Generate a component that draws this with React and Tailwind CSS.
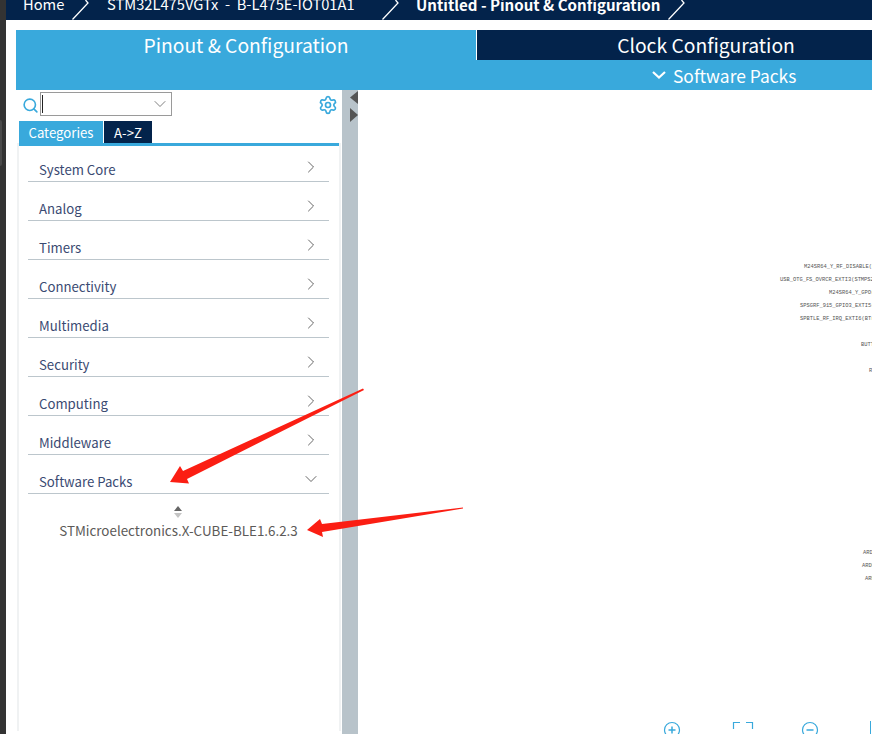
import { ChevronDown, ChevronRight, Search, Settings } from "lucide-react";

const categories = [
  "System Core",
  "Analog",
  "Timers",
  "Connectivity",
  "Multimedia",
  "Security",
  "Computing",
  "Middleware",
];

// pin labels on the chip canvas, clipped by the right edge like in the tool
const pins = [
  { text: "M24SR64_Y_RF_DISABLE(M24SR64", left: 446, top: 171 },
  { text: "USB_OTG_FS_OVRCR_EXTI3(STMPS2141", left: 422, top: 184 },
  { text: "M24SR64_Y_GPO(M24SR64", left: 471, top: 197 },
  { text: "SPSGRF_915_GPIO3_EXTI5(SPSGRF", left: 442, top: 210 },
  { text: "SPBTLE_RF_IRQ_EXTI6(BTrf", left: 442, top: 223 },
  { text: "BUTTON", left: 503, top: 249 },
  { text: "RESET", left: 511, top: 275 },
  { text: "ARDUINO", left: 505, top: 457 },
  { text: "ARDUINO", left: 504, top: 470 },
  { text: "ARDUINO", left: 507, top: 483 },
];

function Crumb({ children, className = "" }) {
  return (
    <div className={`flex items-end shrink-0 ${className}`}>
      <span className="whitespace-nowrap leading-[20px] pb-[6px]">{children}</span>
    </div>
  );
}

function Slash({ className = "" }) {
  return (
    <svg width="17" height="20" viewBox="0 0 17 20" className={`shrink-0 ${className}`}>
      <path d="M0.5 19.5 L16 3 L13.5 0" fill="none" stroke="#fff" strokeWidth="1.3" />
    </svg>
  );
}

export default function App() {
  return (
    <div
      className="relative w-[872px] h-[734px] overflow-hidden bg-white flex text-[#03234b]"
      style={{ fontFamily: '"Noto Sans CJK SC", "Noto Sans", sans-serif' }}
    >
      {/* edge of the window behind */}
      <div className="w-[6px] shrink-0 bg-[#333333] flex flex-col pt-[120px]">
        <div className="h-[46px] w-[2px] bg-[#4a4a4a] rounded-r-sm" />
      </div>

      <div className="flex-1 min-w-0 flex flex-col">
        {/* breadcrumb */}
        <div className="h-[20px] bg-[#03234b] text-white text-[14.7px] flex items-end overflow-hidden pl-[17px] shrink-0">
          <Crumb className="w-[49px]">Home</Crumb>
          <Slash />
          <Crumb className="ml-[18px] w-[275px]">STM32L475VGTx&nbsp;&nbsp;-&nbsp;&nbsp;B-L475E-IOT01A1</Crumb>
          <Slash />
          <Crumb className="ml-[17px] w-[252px] font-bold text-[15.1px]">Untitled - Pinout &amp; Configuration</Crumb>
          <Slash />
        </div>

        <div className="h-[10px] shrink-0" />

        {/* main tabs */}
        <div className="flex h-[30px] shrink-0 pl-[10px]">
          <div className="w-[460px] bg-[#39a9dc] text-white text-[19.3px] leading-[30px] pb-[2px] text-center">
            Pinout &amp; Configuration
          </div>
          <div className="w-[1px] bg-white" />
          <div className="flex-1 bg-[#03234b] text-white text-[19.3px] leading-[30px] text-center pl-[63px]">
            Clock Configuration
          </div>
        </div>
        <div className="h-[30px] shrink-0 ml-[10px] bg-[#39a9dc] text-white flex items-center pl-[636px]">
          <svg width="14" height="8" viewBox="0 0 14 8" className="shrink-0 mb-[1px]">
            <path d="M1 1 L7 6.5 L13 1" fill="none" stroke="#fff" strokeWidth="2.2" />
          </svg>
          <span className="ml-[7px] text-[17.4px] leading-[30px] pt-[1px] whitespace-nowrap">Software Packs</span>
        </div>

        <div className="flex-1 min-h-0 flex pl-[10px]">
          {/* left panel */}
          <div className="w-[326px] shrink-0 flex flex-col">
            <div className="h-[30px] flex items-center pl-[6px] pr-[4px] shrink-0">
              <Search size={17} strokeWidth={2.3} className="text-[#39a9dc] shrink-0 mr-[1px]" />
              <div className="w-[132px] h-[24px] border border-[#9a9a9a] flex items-center justify-between pr-[1px] mb-[2px]">
                <span className="w-[1px] h-[18px] ml-[1px] bg-[#222]" />
                <ChevronDown size={20} strokeWidth={0.9} className="text-[#555]" />
              </div>
              <Settings size={20} strokeWidth={2} className="ml-auto text-[#39a9dc]" />
            </div>

            <div className="flex pl-[3px] h-[22px] mt-[1px] shrink-0 text-[13.2px] leading-[22px]">
              <div className="w-[84px] bg-[#39a9dc] text-white text-center pt-[1px]">Categories</div>
              <div className="ml-[1px] w-[48px] bg-[#03234b] text-white text-center pt-[1px]">A-&gt;Z</div>
            </div>

            <div className="flex-1 min-h-0 ml-[1px] mr-[1px] border-t-[3px] border-[#39a9dc]">
              <div className="h-full border-l-2 border-r-[2px] border-[#f0f2f3] pl-[9px]">
                <div className="w-[301px] -mt-[3px]">
                  {categories.map((name) => (
                    <div
                      key={name}
                      className="h-[39px] border-b border-[#bcc6cc] flex items-end justify-between text-[13.2px] text-[#3a4a72]"
                    >
                      <span className="pl-[11px] leading-[22px]">{name}</span>
                      <ChevronRight size={20} strokeWidth={0.9} className="text-[#333] mr-[8px] mb-[4px]" />
                    </div>
                  ))}
                  <div className="h-[39px] border-b border-[#bcc6cc] flex items-end justify-between text-[13.2px] text-[#3a4a72]">
                    <span className="pl-[11px] leading-[22px]">Software Packs</span>
                    <ChevronDown size={20} strokeWidth={0.9} className="text-[#333] mr-[8px] mb-[4px]" />
                  </div>
                </div>

                {/* sort handle + pack entry */}
                <div className="w-[301px] flex flex-col items-center pt-[12px]">
                  <svg width="8" height="12" viewBox="0 0 8 12" className="ml-[-2px]">
                    <path d="M4 0 L8 5 L0 5 Z" fill="#666" />
                    <path d="M4 12 L8 7 L0 7 Z" fill="#c4c4c4" />
                  </svg>
                  <span className="mt-[2px] text-[13.4px] leading-[20px] text-[#5c5a58] whitespace-nowrap">
                    STMicroelectronics.X-CUBE-BLE1.6.2.3
                  </span>
                </div>
              </div>
            </div>
          </div>

          {/* splitter */}
          <div className="w-[16px] shrink-0 bg-[#b8c3ca] flex flex-col items-end pt-[1px]">
            <svg width="8" height="32" viewBox="0 0 8 32">
              <path d="M8 0 V13 L0 6.5 Z" fill="#555" />
              <path d="M0 17 V31 L8 24 Z" fill="#555" />
            </svg>
          </div>

          {/* chip canvas */}
          <div className="relative flex-1 min-w-0 overflow-hidden">
            {pins.map((pin) => (
              <span
                key={pin.top}
                className="absolute text-[5.4px] leading-[8px] text-[#555] whitespace-nowrap"
                style={{ left: pin.left, top: pin.top + 2, fontFamily: '"Liberation Mono", monospace' }}
              >
                {pin.text}
              </span>
            ))}
            <svg className="absolute left-[305px] top-[631px]" width="18" height="14" viewBox="0 0 18 14">
              <circle cx="9" cy="9" r="7.5" fill="none" stroke="#39a9dc" strokeWidth="1.2" />
              <path d="M9 5.5 V12.5 M5.5 9 H12.5" stroke="#39a9dc" strokeWidth="1.5" />
            </svg>
            <svg className="absolute left-[374px] top-[631px]" width="22" height="14" viewBox="0 0 22 14">
              <path d="M1.5 8 V1.5 H8 M14 1.5 H20.5 V8" fill="none" stroke="#39a9dc" strokeWidth="1.2" />
            </svg>
            <svg className="absolute left-[443px] top-[631px]" width="18" height="14" viewBox="0 0 18 14">
              <circle cx="9" cy="9" r="7.5" fill="none" stroke="#39a9dc" strokeWidth="1.2" />
              <path d="M5.5 9 H12.5" stroke="#39a9dc" strokeWidth="1.5" />
            </svg>
            <div className="absolute left-[512px] top-[631px] w-[1px] h-[14px] bg-[#39a9dc]" />
          </div>
        </div>
      </div>

      {/* red annotation arrows on top of the screenshot */}
      <svg className="absolute left-0 top-0 pointer-events-none" width="872" height="734" viewBox="0 0 872 734">
        <path d="M363 388.5 L183 471 L180 466 L170 482 L189 483.5 L187 479 L364 390 Z" fill="#fb1e13" />
        <path d="M463 507.5 L322 524 L320 519 L307 530 L323 537 L322 532 L463 508.5 Z" fill="#fb1e13" />
      </svg>
    </div>
  );
}
